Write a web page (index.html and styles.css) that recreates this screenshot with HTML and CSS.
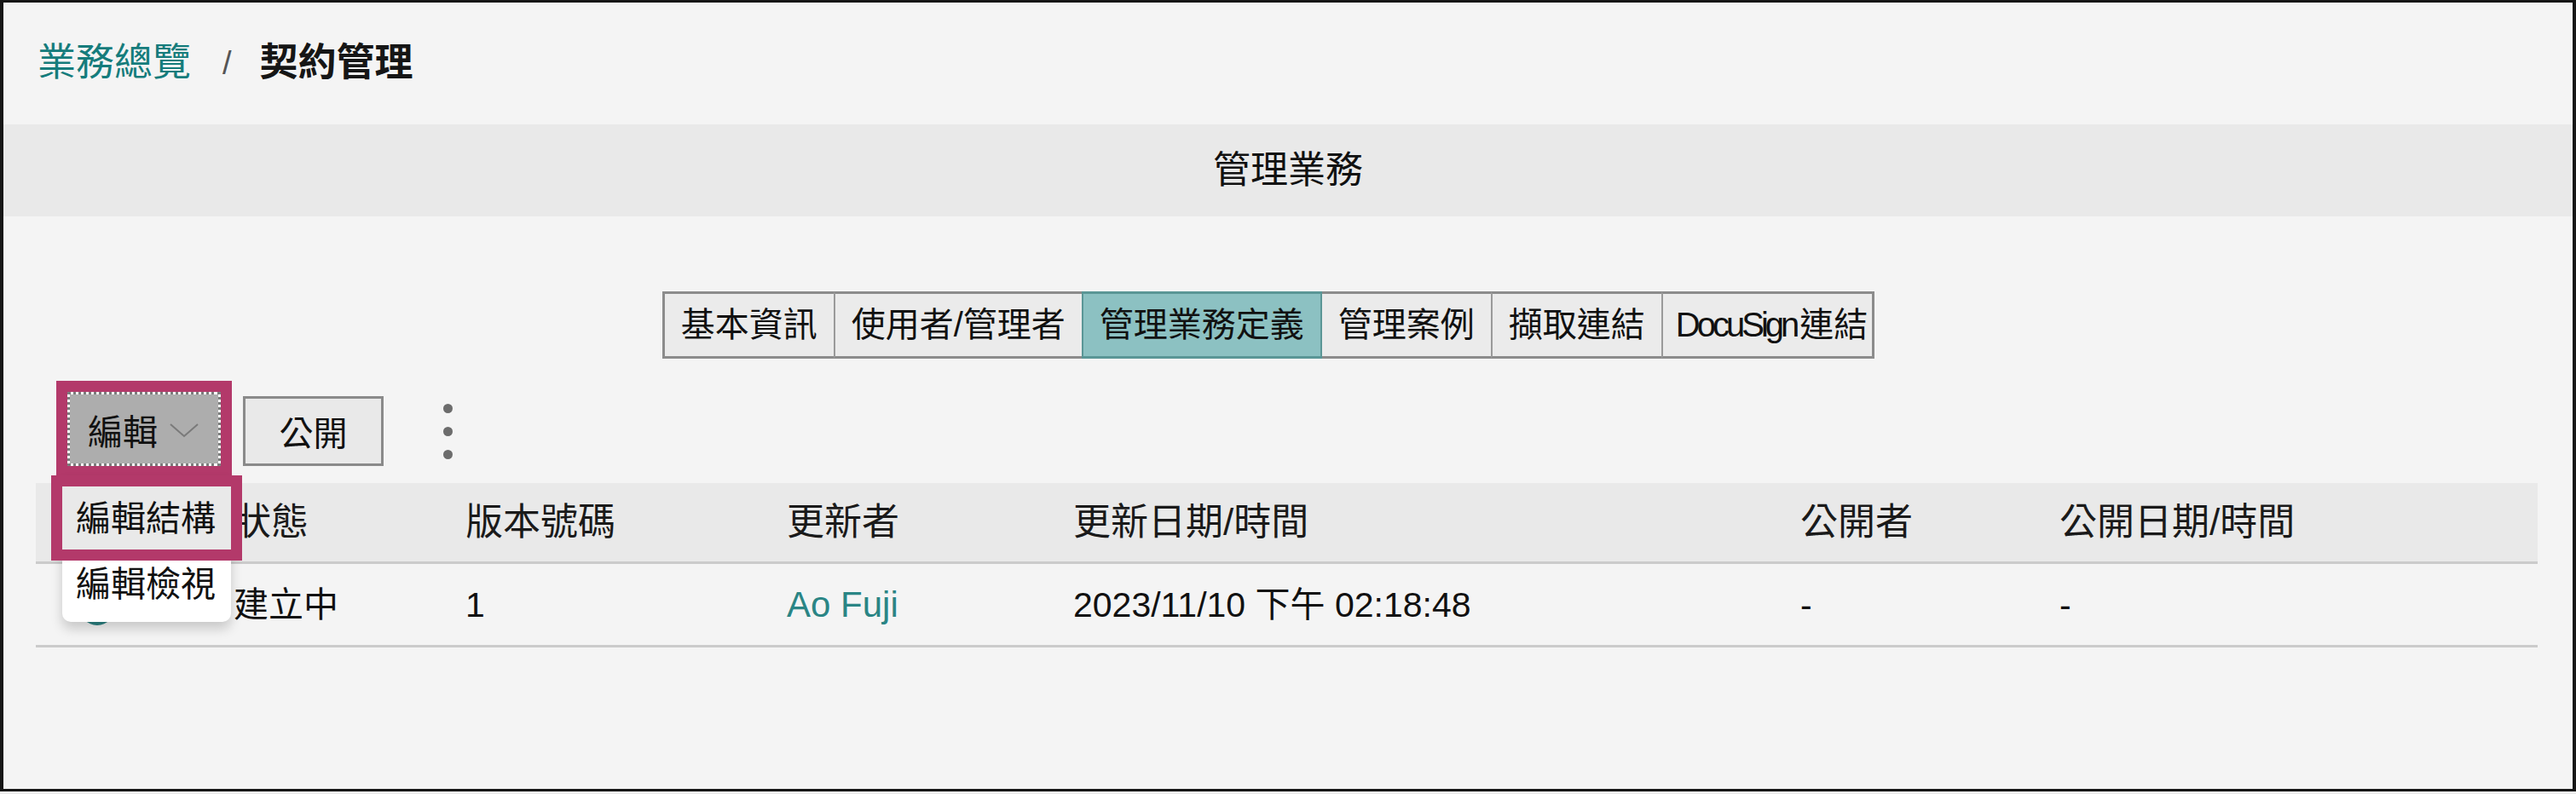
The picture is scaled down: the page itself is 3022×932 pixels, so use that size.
FILE: index.html
```html
<!DOCTYPE html>
<html lang="zh-Hant">
<head>
    <meta charset="UTF-8">
    <meta name="viewport" content="width=device-width, initial-scale=1.0">
    <title>契約管理</title>
    <link rel="stylesheet" href="styles.css">
</head>
<body>
    <div class="frame">
        <nav class="breadcrumb">
            <a class="crumb-link" href="#">業務總覽</a>
            <span class="crumb-sep">/</span>
            <span class="crumb-current">契約管理</span>
        </nav>

        <div class="section-title">管理業務</div>

        <div class="tabs">
            <div class="tab">基本資訊</div>
            <div class="tab">使用者/管理者</div>
            <div class="tab active">管理業務定義</div>
            <div class="tab">管理案例</div>
            <div class="tab">擷取連結</div>
            <div class="tab"><span class="latin">DocuSign</span>連結</div>
        </div>

        <div class="toolbar">
            <div class="edit-group">
                <button class="btn-edit">
                    <span>編輯</span>
                    <svg class="chevron" width="34" height="17" viewBox="0 0 34 17">
                        <path d="M1 1 L17 15 L33 1" fill="none" stroke="#7a7a7a" stroke-width="2"/>
                    </svg>
                </button>
                <div class="menu">
                    <div class="menu-item hover">編輯結構</div>
                    <div class="menu-item">編輯檢視</div>
                </div>
                <div class="mark"></div>
            </div>
            <button class="btn">公開</button>
            <div class="kebab"><i></i><i></i><i></i></div>
        </div>

        <div class="table">
            <div class="row head">
                <div class="cell"></div>
                <div class="cell">狀態</div>
                <div class="cell">版本號碼</div>
                <div class="cell">更新者</div>
                <div class="cell">更新日期/時間</div>
                <div class="cell">公開者</div>
                <div class="cell">公開日期/時間</div>
            </div>
            <div class="row">
                <div class="cell icon-cell">
                    <svg width="44" height="44" viewBox="0 0 44 44">
                        <circle cx="22" cy="22" r="19" fill="none" stroke="#2b8282" stroke-width="4"/>
                    </svg>
                </div>
                <div class="cell">建立中</div>
                <div class="cell">1</div>
                <div class="cell"><a class="user-link" href="#">Ao Fuji</a></div>
                <div class="cell">2023/11/10 下午 02:18:48</div>
                <div class="cell">-</div>
                <div class="cell">-</div>
            </div>
        </div>
    </div>
</body>
</html>
```

FILE: styles.css
```css
body {
    margin: 0;
    padding: 0;
    background-color: #ececec;
    font-family: "Liberation Sans", "Noto Sans CJK TC", sans-serif;
    color: #111;
}

.frame {
    box-sizing: border-box;
    width: 3022px;
    height: 929px;
    border: 3px solid #161616;
    border-left-width: 4px;
    border-right-width: 4px;
    background-color: #f4f4f4;
    overflow: hidden;
}

/* breadcrumb */
.breadcrumb {
    height: 143px;
    box-sizing: border-box;
    padding: 45px 0 0 40px;
    font-size: 45px;
    line-height: 52px;
    display: flex;
    align-items: flex-start;
}

.crumb-link {
    color: #157c7c;
    text-decoration: none;
}

.crumb-sep {
    color: #555;
    margin: 0 33px 0 37px;
    font-size: 38px;
}

.crumb-current {
    font-weight: 700;
    color: #161616;
}

.section-title {
    height: 108px;
    line-height: 108px;
    text-align: center;
    background-color: #e9e9e9;
    font-size: 44px;
}

/* tabs */
.tabs {
    display: flex;
    justify-content: center;
    margin-top: 88px;
    padding-right: 46px;
}

.tab {
    font-size: 40px;
    line-height: 49px;
    padding: 12px 19px;
    background-color: #ebebeb;
    border-top: 3px solid #8c8c8c;
    border-bottom: 3px solid #8c8c8c;
    border-left: 2px solid #9a9a9a;
    white-space: nowrap;
}

.tab:first-child {
    border-left: 3px solid #8c8c8c;
}

.tab:last-child {
    border-right: 3px solid #8c8c8c;
    padding-left: 15px;
    padding-right: 5px;
}

.tab .latin {
    letter-spacing: -4px;
    margin-right: 4px;
}

.tab.active {
    background-color: #8cc1c2;
    border: 2px solid #5a9696;
    border-top-width: 3px;
    border-bottom-width: 3px;
}

.tab.active + .tab {
    border-left: none;
}

/* toolbar */
.toolbar {
    display: flex;
    align-items: center;
    margin-top: 26px;
    padding-left: 62px;
}

.edit-group {
    position: relative;
    border: 13px solid #b3396a;
    border-bottom-width: 12px;
    background-color: #fff;
}

.btn-edit {
    display: flex;
    align-items: center;
    height: 87px;
    box-sizing: border-box;
    padding: 0 23px 0 21px;
    border: 3px dotted #7c7c7c;
    background-color: #adadad;
    background-clip: padding-box;
    font-family: inherit;
    font-size: 41px;
    color: #111;
}

.chevron {
    margin-left: 14px;
    margin-top: 4px;
}

.menu {
    position: absolute;
    left: -6px;
    top: 99px;
    width: 198px;
    padding-top: 12px;
    background-color: #fff;
    border-radius: 0 0 10px 10px;
    box-shadow: 0 8px 14px rgba(0, 0, 0, 0.18);
    z-index: 2;
}

.menu-item {
    padding-left: 16px;
    font-size: 41px;
    line-height: 76px;
    white-space: nowrap;
}

.menu-item + .menu-item {
    line-height: 78px;
    padding-bottom: 5px;
}

.menu-item.hover {
    background-color: #e9e9e9;
}

.mark {
    position: absolute;
    left: -19px;
    top: 98px;
    width: 224px;
    height: 100px;
    box-sizing: border-box;
    border: 13px solid #b3396a;
    z-index: 3;
}

.btn {
    margin-left: 13px;
    width: 165px;
    height: 82px;
    margin-top: 6px;
    border: 3px solid #8a8a8a;
    background-color: #e9e9e9;
    font-family: inherit;
    font-size: 40px;
    color: #111;
}

.kebab {
    display: flex;
    flex-direction: column;
    gap: 16px;
    margin-left: 70px;
    margin-top: 6px;
}

.kebab i {
    display: block;
    width: 11px;
    height: 11px;
    border-radius: 50%;
    background-color: #6c6c6c;
}

/* table */
.table {
    margin: 8px 41px 0 38px;
}

.row {
    display: grid;
    grid-template-columns: 232px 272px 377px 336px 853px 304px 1fr;
    height: 95px;
    align-items: center;
    border-bottom: 3px solid #cbcbcb;
    font-size: 41px;
    line-height: 48px;
}

.row.head {
    height: 92px;
    background-color: #e9e9e9;
    font-size: 44px;
    color: #1a1a1a;
}

.icon-cell {
    padding-left: 50px;
    display: flex;
    margin-top: 6px;
}

.user-link {
    color: #2a8585;
    text-decoration: none;
    font-size: 42px;
}
```
